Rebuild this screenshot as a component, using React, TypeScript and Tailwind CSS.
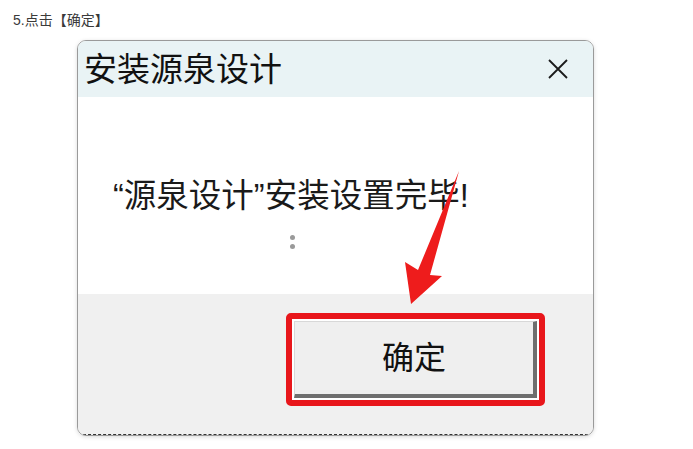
import React from 'react';

const cjk = { fontFamily: '"Liberation Sans", "Noto Sans CJK SC", sans-serif' };

export default function App() {
  return (
    <div className="relative w-[693px] h-[449px] bg-white overflow-hidden" style={cjk}>
      {/* step caption */}
      <div className="pt-[12px] pl-[13px] text-[14px] leading-[16px] text-[#3a3a3a]">5.点击【确定】</div>

      {/* dialog */}
      <div className="mt-[12px] ml-[77px] w-[517px] h-[396px] flex flex-col rounded-[9px] border border-[#9a9a9a] overflow-hidden shadow-[0_1px_4px_rgba(0,0,0,0.15)]">
        <div className="h-[56px] flex items-center justify-between pl-[6px] pr-[25px] bg-[#e9f3f5]">
          <span className="text-[33px] leading-none text-[#111]">安装源泉设计</span>
          <svg width="20" height="20" viewBox="0 0 20 20">
            <path d="M1 1 L19 19 M19 1 L1 19" stroke="#1a1a1a" strokeWidth="1.8" />
          </svg>
        </div>

        <div className="h-[197px] bg-white pl-[35px] pt-[79px]">
          <div className="text-[32.5px] leading-[40px] text-[#1a1a1a]">“源泉设计”安装设置完毕!</div>
          <div className="ml-[177px] mt-[19px] flex flex-col gap-[4px]">
            <span className="w-[5px] h-[5px] rounded-full bg-[#9a9a9a]" />
            <span className="w-[5px] h-[5px] rounded-full bg-[#9a9a9a]" />
          </div>
        </div>

        <div className="flex-1 bg-[#f0f0f0] flex justify-end pr-[48px] pt-[19px] border-b border-dashed border-[#333]">
          <div className="w-[259px] h-[93px] border-[6px] border-[#e8161b] rounded-[5px] p-[2px] bg-white">
            <button className="w-full h-full flex items-center justify-center bg-[#efefef] border-t border-l border-t-[#d8d8d8] border-l-[#d8d8d8] border-r-[4px] border-b-[4px] border-r-[#6e6e6e] border-b-[#6e6e6e] text-[32px] leading-none text-[#111]">
              确定
            </button>
          </div>
        </div>
      </div>

      {/* red arrow pointing at the button */}
      <svg className="absolute left-0 top-0 pointer-events-none" width="693" height="449" viewBox="0 0 693 449">
        <polygon
          points="459,171 430,275 442,276 411,304 405,262 418,270"
          fill="#ee1c1c"
        />
      </svg>
    </div>
  );
}
